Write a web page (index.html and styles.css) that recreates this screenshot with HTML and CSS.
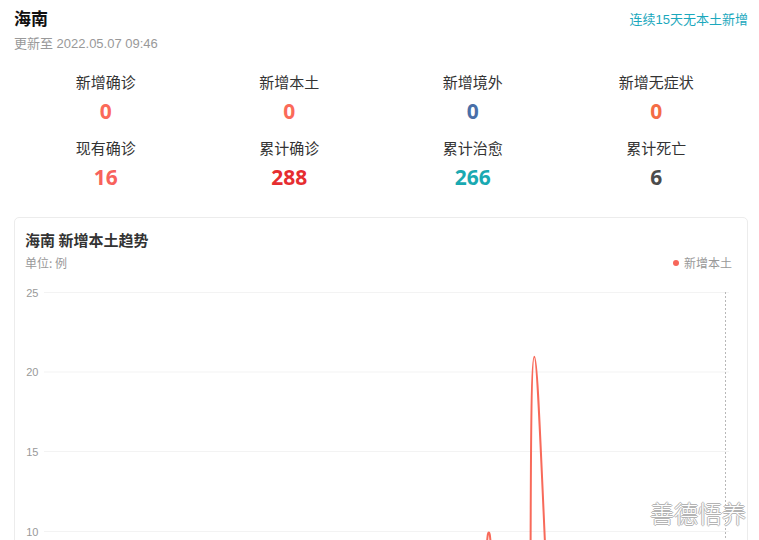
FILE: index.html
```html
<!DOCTYPE html>
<html lang="zh">
<head>
<meta charset="utf-8">
<title>海南</title>
<link rel="stylesheet" href="styles.css">
</head>
<body>
<div class="page">
  <div class="header">
    <div class="head-left">
      <div class="title">海南</div>
      <div class="update">更新至 2022.05.07 09:46</div>
    </div>
    <div class="streak">连续15天无本土新增</div>
  </div>

  <div class="stats">
    <div class="stat"><div class="label">新增确诊</div><div class="num c-coral">0</div></div>
    <div class="stat"><div class="label">新增本土</div><div class="num c-coral">0</div></div>
    <div class="stat"><div class="label">新增境外</div><div class="num c-blue">0</div></div>
    <div class="stat"><div class="label">新增无症状</div><div class="num c-orange">0</div></div>
    <div class="stat"><div class="label">现有确诊</div><div class="num c-pink">16</div></div>
    <div class="stat"><div class="label">累计确诊</div><div class="num c-red">288</div></div>
    <div class="stat"><div class="label">累计治愈</div><div class="num c-teal">266</div></div>
    <div class="stat"><div class="label">累计死亡</div><div class="num c-dark">6</div></div>
  </div>

  <div class="card">
    <div class="card-title">海南 新增本土趋势</div>
    <div class="card-sub">
      <span class="unit">单位: 例</span>
      <span class="legend"><span class="dot"></span>新增本土</span>
    </div>
    <svg class="chart" width="707" height="300" viewBox="25 280 707 300" xmlns="http://www.w3.org/2000/svg">
      <g stroke="#f3f3f3" stroke-width="1">
        <line x1="44" y1="292.5" x2="729" y2="292.5"/>
        <line x1="44" y1="372" x2="729" y2="372"/>
        <line x1="44" y1="451.5" x2="729" y2="451.5"/>
        <line x1="44" y1="531.5" x2="729" y2="531.5"/>
      </g>
      <g fill="#999" font-size="11" font-family="Liberation Sans, Arial, sans-serif" text-anchor="end">
        <text x="38.5" y="296.5">25</text>
        <text x="38.5" y="376">20</text>
        <text x="38.5" y="455.5">15</text>
        <text x="38.5" y="535.5">10</text>
      </g>
      <line x1="725.5" y1="292" x2="725.5" y2="580" stroke="#b8b8b8" stroke-width="1" stroke-dasharray="2 2"/>
      <g fill="none" stroke="#f86a5a" stroke-width="2">
        <path d="M486.6,548 C487.6,534 488,532.4 488.8,532.4 C489.6,532.4 490,534 491,548"/>
        <path d="M530.6,548 C530.9,430 531.6,356.8 534.3,356.8 C537,356.8 539.5,420 545.2,548"/>
      </g>
    </svg>
  </div>
</div>
<div class="watermark">善德悟养</div>
</body>
</html>
```

FILE: styles.css
```css
* { box-sizing: border-box; }
html, body { margin: 0; padding: 0; background: #fff; }
body {
  font-family: "Liberation Sans", "Noto Sans CJK SC", sans-serif;
  color: #333;
  width: 759px;
  overflow: hidden;
  position: relative;
}
.page {
  padding: 6px 11px 0 14px;
}
.header {
  display: flex;
  justify-content: space-between;
  align-items: flex-start;
}
.title {
  font-family: "Noto Sans CJK SC", sans-serif;
  font-weight: 700;
  font-size: 17px;
  line-height: 24px;
  color: #111;
}
.update {
  margin-top: 5px;
  font-size: 13px;
  line-height: 18px;
  color: #999;
}
.streak {
  margin-top: 4px;
  font-size: 13px;
  line-height: 20px;
  color: #1ba8bd;
}
.stats {
  display: grid;
  grid-template-columns: repeat(4, 1fr);
  row-gap: 13px;
  margin-top: 19px;
}
.stat {
  text-align: center;
}
.label {
  font-family: "Noto Sans CJK SC", sans-serif;
  font-size: 15px;
  line-height: 20px;
  color: #333;
}
.num {
  margin-top: 5px;
  font-family: "Noto Sans", "Noto Sans CJK SC", sans-serif;
  font-weight: 700;
  font-size: 21px;
  line-height: 28px;
}
.c-coral { color: #fb6a59; }
.c-blue { color: #4a6fa8; }
.c-orange { color: #f46c45; }
.c-pink { color: #f8625c; }
.c-red { color: #e62d30; }
.c-teal { color: #19a9b1; }
.c-dark { color: #4b4b4b; }

.card {
  margin-top: 26px;
  width: 734px;
  border: 1px solid #ececec;
  border-radius: 5px;
  padding: 12px 15px 0 10px;
  height: 400px;
}
.card-title {
  font-family: "Noto Sans CJK SC", sans-serif;
  font-weight: 700;
  font-size: 15px;
  line-height: 20px;
  color: #333;
}
.card-sub {
  margin-top: 5px;
  display: flex;
  justify-content: space-between;
  align-items: center;
  font-size: 12px;
  line-height: 16px;
  color: #999;
  font-family: "Noto Sans CJK SC", sans-serif;
}
.legend {
  display: flex;
  align-items: center;
}
.dot {
  width: 6px;
  height: 6px;
  border-radius: 50%;
  background: #f7665a;
  margin-right: 5px;
}
.chart {
  display: block;
  margin-top: 9px;
}
.watermark {
  position: absolute;
  left: 650px;
  top: 500px;
  font-family: "Noto Sans CJK SC", sans-serif;
  font-weight: 300;
  font-size: 24px;
  line-height: 26px;
  color: #fff;
  text-shadow: 1px 0 0 #b4b4b4, -1px 0 0 #b4b4b4, 0 1px 0 #b4b4b4, 0 -1px 0 #b4b4b4;
}
```
